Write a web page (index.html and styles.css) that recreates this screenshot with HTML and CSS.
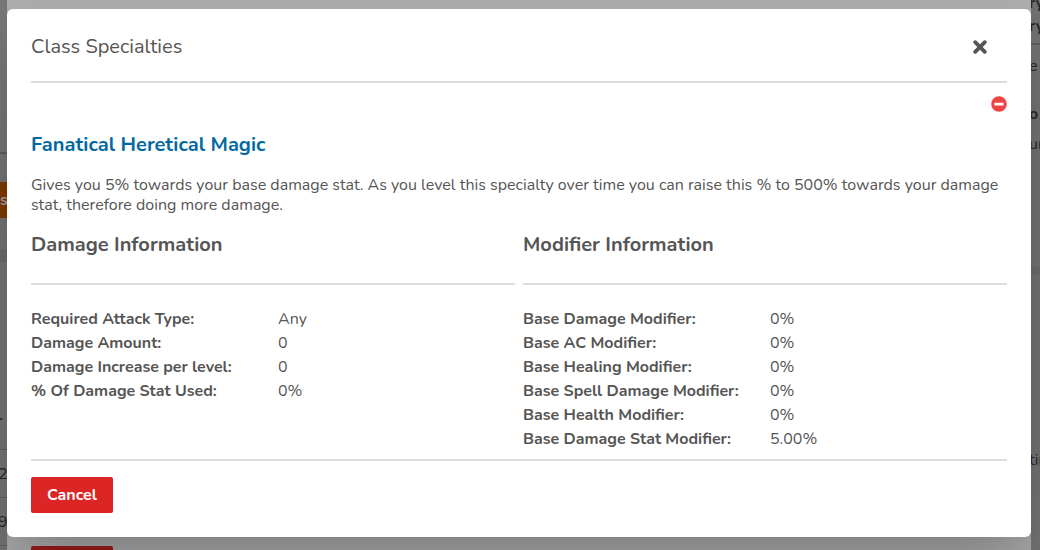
FILE: index.html
```html
<!DOCTYPE html>
<html lang="en">
<head>
<meta charset="utf-8">
<meta name="viewport" content="width=device-width, initial-scale=1">
<title>Class Specialties</title>
<link rel="stylesheet" href="styles.css">
</head>
<body>
<div class="page" aria-hidden="true">
  <div class="edge edge-left">
    <div class="card card-top"><div class="strip">s</div></div>
    <div class="card card-table">
      <div class="cell cell-head">r</div>
      <div class="cell">28</div>
      <div class="cell">9,</div>
      <div class="cell"></div>
    </div>
  </div>
  <div class="edge edge-right">
    <div class="card card-side">
      <div class="line strong">ry</div>
      <div class="line strong ruled">ry</div>
      <div class="line">e</div>
      <div class="line strong spaced">o</div>
      <div class="line">ur</div>
    </div>
    <div class="card card-log"><div class="line">tin</div></div>
  </div>
</div>
<div class="under-dialog" aria-hidden="true"><div class="under-button"></div></div>
<div class="overlay">
  <section class="dialog" role="dialog" aria-modal="true" aria-labelledby="dialog-title">
    <header class="dialog-header">
      <h1 class="title" id="dialog-title">Class Specialties</h1>
      <button class="icon-button close" type="button" aria-label="Close">
        <svg width="14" height="14" viewBox="0 0 14 14"><path d="M2.2 2.2 11.8 11.8M11.8 2.2 2.2 11.8" fill="none" stroke="currentColor" stroke-width="3.8" stroke-linecap="round"/></svg>
      </button>
    </header>
    <div class="toolbar">
      <button class="icon-button remove" type="button" aria-label="Remove">
        <svg width="16" height="16" viewBox="0 0 16 16"><circle cx="8" cy="8" r="7.8" fill="currentColor"/><rect x="3.4" y="6.7" width="9.2" height="2.7" rx=".4" fill="#fff"/></svg>
      </button>
    </div>
    <h2 class="name">Fanatical Heretical Magic</h2>
    <p class="description">Gives you 5% towards your base damage stat. As you level this specialty over time you can raise this % to 500% towards your damage stat, therefore doing more damage.</p>
    <div class="columns">
      <section>
        <h3 class="heading">Damage Information</h3>
        <dl class="stats">
          <dt>Required Attack Type:</dt><dd>Any</dd>
          <dt>Damage Amount:</dt><dd>0</dd>
          <dt>Damage Increase per level:</dt><dd>0</dd>
          <dt>% Of Damage Stat Used:</dt><dd>0%</dd>
        </dl>
      </section>
      <section>
        <h3 class="heading">Modifier Information</h3>
        <dl class="stats">
          <dt>Base Damage Modifier:</dt><dd>0%</dd>
          <dt>Base AC Modifier:</dt><dd>0%</dd>
          <dt>Base Healing Modifier:</dt><dd>0%</dd>
          <dt>Base Spell Damage Modifier:</dt><dd>0%</dd>
          <dt>Base Health Modifier:</dt><dd>0%</dd>
          <dt>Base Damage Stat Modifier:</dt><dd>5.00%</dd>
        </dl>
      </section>
    </div>
    <footer class="dialog-footer"><button class="cancel" type="button">Cancel</button></footer>
  </section>
</div>
</body>
</html>
```
FILE: styles.css
```css
* { box-sizing: border-box; }
body {
  margin: 0;
  height: 100vh;
  overflow: hidden;
  font: 16px/24px Nunito, "Open Sans", sans-serif;
  color: #555;
  background: #686868;
}
h1, h2, h3, p, dl, dd { margin: 0; }
button { font: inherit; border: 0; cursor: pointer; }

.page {
  display: flex;
  justify-content: space-between;
  height: 100%;
  color: #262626;
}
.edge {
  display: flex;
  flex-direction: column;
  overflow: hidden;
  white-space: nowrap;
  text-indent: -2px;
}
.edge-left { width: 7px; }
.edge-right { width: 9px; }
.card { background: #707070; }
.card-top {
  height: 249px;
  padding-top: 152px;
  background: linear-gradient(#777, #6f6f6f);
  margin-bottom: 13px;
  flex: none;
}
.strip {
  height: 66px;
  padding: 28px 0 0;
  border-top: 2px solid #5c5c5c;
  color: #999;
  font-weight: 700;
  line-height: 36px;
  text-indent: 0;
  background: linear-gradient(#7d3800, #7d3800) 0 28px / 100% 36px no-repeat;
}
.card-table { padding-top: 147px; flex: 1; }
.cell {
  height: 48px;
  padding: 12px 0;
  border-top: 1px solid #5c5c5c;
}
.cell-head {
  height: 40px;
  padding: 0;
  border: 0;
  font-weight: 700;
  text-indent: -4px;
}
.card-side { height: 267px; flex: none; margin-bottom: 8px; }
.line { height: 30px; }
.strong { height: 24px; font-weight: 700; }
.strong:first-child { height: 14px; line-height: 6px; }
.ruled {
  height: 31px;
  margin-bottom: 9px;
  border-bottom: 2px solid #5c5c5c;
}
.spaced { margin-top: 18px; height: 30px; }
.card-log { flex: 1; padding-top: 173px; }

/* Dialog dimmed behind the open one */
.under-dialog {
  position: absolute;
  inset: 0 9px 0 7px;
  display: flex;
  align-items: flex-end;
  padding: 0 24px;
  background: linear-gradient(#adadad, #a3a3a3);
}
.under-button {
  width: 82px;
  height: 4px;
  border-radius: 2px 2px 0 0;
  background: #951a1a;
}

.overlay {
  position: absolute;
  inset: 0;
  padding: 9px 9px 13px 7px;
}
.dialog {
  padding: 24px;
  border-radius: 6px;
  background: #fff;
  box-shadow: 0 25px 50px -12px rgba(0, 0, 0, .25);
}
.dialog-header {
  display: flex;
  justify-content: space-between;
  align-items: center;
  height: 50px;
  padding: 0 20px 20px 0;
  border-bottom: 2px solid #ddd;
}
.title { font-size: 20px; font-weight: 400; line-height: 28px; }
.icon-button {
  display: flex;
  padding: 0;
  background: none;
}
.close { color: #555; }
.remove { color: #ef4444; }
.toolbar {
  display: flex;
  justify-content: flex-end;
  padding: 13px 0 19px;
}
.name {
  color: #0369a1;
  font-size: 20px;
  line-height: 28px;
}
.description { margin: 16px 0; line-height: 20px; }
.columns {
  display: grid;
  grid-template-columns: 1fr 1fr;
  gap: 8px;
}
.heading {
  padding-bottom: 24px;
  border-bottom: 2px solid #ddd;
  font-size: 20px;
  line-height: 28px;
}
.stats {
  display: grid;
  grid-template-columns: 1fr 1fr;
  column-gap: 10px;
  padding: 22px 0 8px;
}
.stats dt { font-weight: 700; white-space: nowrap; }
.dialog-footer { padding-top: 16px; border-top: 2px solid #ddd; }
.cancel {
  padding: 6px 16px;
  border-radius: 2px;
  color: #fff;
  background: #dc2626;
  font-weight: 700;
}
```
